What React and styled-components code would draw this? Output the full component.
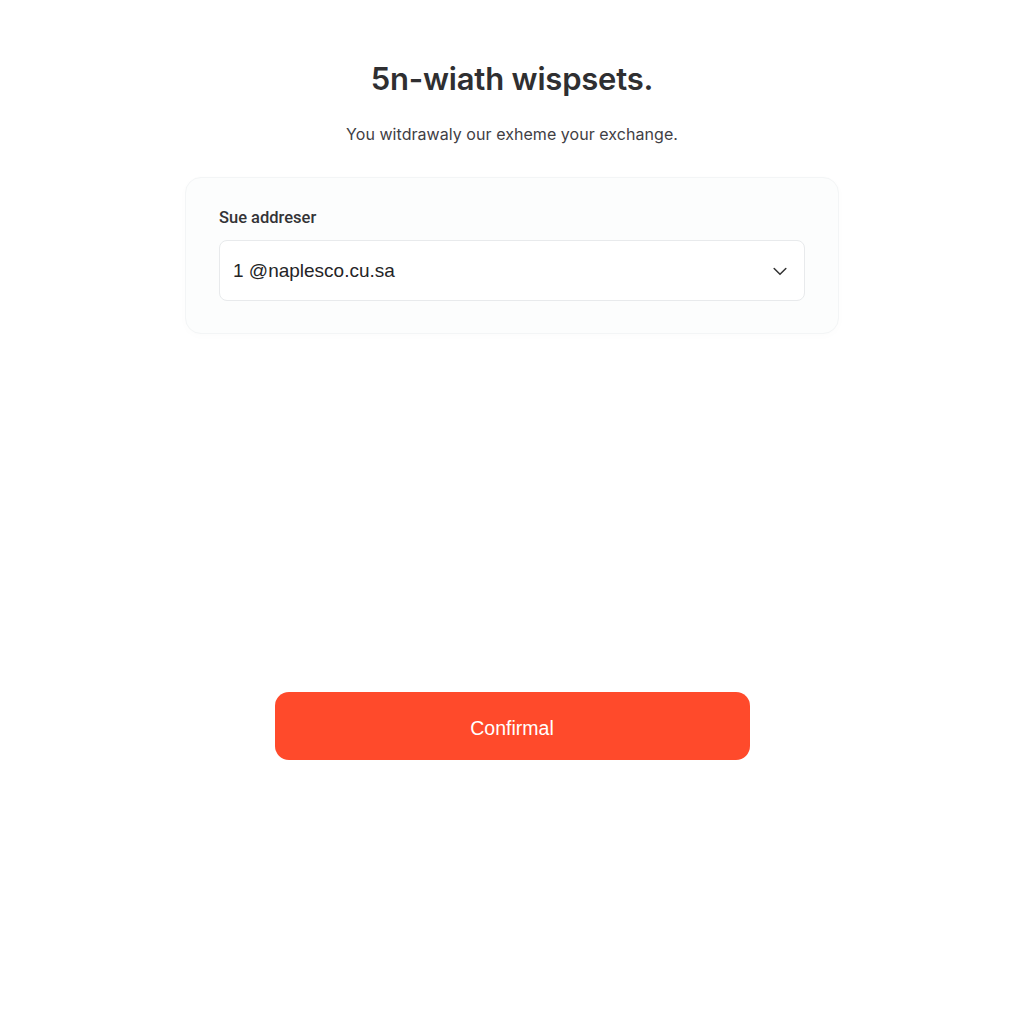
import React, { Component } from "react";
import styled, { createGlobalStyle } from "styled-components";

const GlobalStyle = createGlobalStyle`
  html, body {
    margin: 0;
    padding: 0;
    background: #ffffff;
  }
  body {
    font-family: "Inter", "Liberation Sans", sans-serif;
  }
`;

let Page = styled.main`
  display: flex;
  flex-direction: column;
  align-items: center;
  min-height: 1024px;
  padding-top: 59px;
  box-sizing: border-box;
`;

let Title = styled.h1`
  margin: 0;
  font-family: "Inter", sans-serif;
  font-weight: 600;
  font-size: 31px;
  line-height: 40px;
  color: #2f2f31;
  letter-spacing: -0.2px;
`;

let Subtitle = styled.p`
  margin: 23px 0 0;
  font-family: "Inter", sans-serif;
  font-size: 16px;
  line-height: 24px;
  color: #3f4044;
  letter-spacing: 0.05px;
`;

let Card = styled.section`
  margin-top: 31px;
  width: 654px;
  box-sizing: border-box;
  padding: 29px 33px 32px 33px;
  background: #fcfdfd;
  border: 1px solid #f3f5f6;
  border-radius: 16px;
  box-shadow: 0 2px 10px rgba(0, 0, 0, 0.015);
`;

let Label = styled.label`
  display: block;
  font-family: "Roboto", "Liberation Sans", sans-serif;
  font-weight: 500;
  font-size: 16.5px;
  line-height: 22px;
  color: #333336;
  margin-bottom: 11px;
`;

let Select = styled.button`
  display: flex;
  align-items: center;
  justify-content: space-between;
  width: 100%;
  height: 61px;
  padding: 0 14px 0 13px;
  box-sizing: border-box;
  background: #ffffff;
  border: 1px solid #e8eaec;
  border-radius: 8px;
  font-family: "Liberation Sans", sans-serif;
  font-size: 19px;
  color: #242426;
  cursor: pointer;
`;

let Chevron = styled.svg`
  width: 20px;
  height: 20px;
  color: #333;
`;

let Actions = styled.div`
  margin-top: 358px;
  display: flex;
  justify-content: center;
`;

let Button = styled.button`
  width: 475px;
  height: 68px;
  padding-top: 6px;
  border: none;
  border-radius: 14px;
  background: #ff4a2b;
  color: #ffffff;
  font-family: "Liberation Sans", sans-serif;
  font-size: 19.5px;
  font-weight: 500;
  cursor: pointer;
`;

class App extends Component {
  state = {
    address: "1 @naplesco.cu.sa",
  };

  render() {
    return (
      <>
        <GlobalStyle />
        <Page>
          <Title>5n-wiath wispsets.</Title>
          <Subtitle>You witdrawaly our exheme your exchange.</Subtitle>
          <Card>
            <Label htmlFor="address">Sue addreser</Label>
            <Select id="address" type="button">
              <span>{this.state.address}</span>
              <Chevron viewBox="0 0 24 24" fill="none" stroke="currentColor" strokeWidth="1.8" strokeLinecap="round" strokeLinejoin="round">
                <path d="M5 9l7 7 7-7" />
              </Chevron>
            </Select>
          </Card>
          <Actions>
            <Button type="submit">Confirmal</Button>
          </Actions>
        </Page>
      </>
    );
  }
}

export default App;
